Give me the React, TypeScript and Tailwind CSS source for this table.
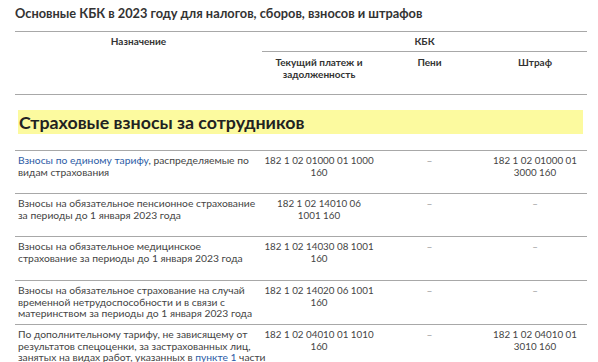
import React from "react";

type Row = {
  h: string;
  name: React.ReactNode;
  cur: React.ReactNode;
  peni: React.ReactNode;
  fine: React.ReactNode;
};

const Dash = () => <span className="text-[#999]">–</span>;

const rows: Row[] = [
  {
    h: "h-[43px]",
    name: (
      <>
        <span className="text-[#2d5ca6]">Взносы по единому тарифу</span>, распределяемые по
        <br />
        видам страхования
      </>
    ),
    cur: (
      <>
        182 1 02 01000 01 1000
        <br />
        160
      </>
    ),
    peni: <Dash />,
    fine: (
      <>
        182 1 02 01000 01
        <br />
        3000 160
      </>
    ),
  },
  {
    h: "h-[43px]",
    name: (
      <>
        Взносы на обязательное пенсионное страхование
        <br />
        за периоды до 1 января 2023 года
      </>
    ),
    cur: (
      <>
        182 1 02 14010 06
        <br />
        1001 160
      </>
    ),
    peni: <Dash />,
    fine: <Dash />,
  },
  {
    h: "h-[44px]",
    name: (
      <>
        Взносы на обязательное медицинское
        <br />
        страхование за периоды до 1 января 2023 года
      </>
    ),
    cur: (
      <>
        182 1 02 14030 08 1001
        <br />
        160
      </>
    ),
    peni: <Dash />,
    fine: <Dash />,
  },
  {
    h: "h-[44px]",
    name: (
      <>
        Взносы на обязательное страхование на случай
        <br />
        временной нетрудоспособности и в связи с
        <br />
        материнством за периоды до 1 января 2023 года
      </>
    ),
    cur: (
      <>
        182 1 02 14020 06 1001
        <br />
        160
      </>
    ),
    peni: <Dash />,
    fine: <Dash />,
  },
  {
    h: "h-[44px]",
    name: (
      <>
        По дополнительному тарифу, не зависящему от
        <br />
        результатов спецоценки, за застрахованных лиц,
        <br />
        занятых на видах работ, указанных в <span className="text-[#2d5ca6]">пункте 1</span> части
      </>
    ),
    cur: (
      <>
        182 1 02 04010 01 1010
        <br />
        160
      </>
    ),
    peni: <Dash />,
    fine: (
      <>
        182 1 02 04010 01
        <br />
        3010 160
      </>
    ),
  },
];

export default function App() {
  return (
    <div className="w-[598px] h-[362px] overflow-hidden bg-white pl-[15px] pr-[11px] font-['Lato',sans-serif] text-[#444]">
      <div className="h-[31px] pt-[4px] text-[12.8px] leading-[18px] font-bold text-[#333] whitespace-nowrap">
        Основные КБК в 2023 году для налогов, сборов, взносов и штрафов
      </div>

      <div className="grid grid-cols-[247px_114px_107px_104px] border-t border-b border-[#a8a8a8] text-[10px] leading-[12px] font-bold text-[#333]">
        <div className="row-span-2 pt-[3px] text-center">Назначение</div>
        <div className="col-span-3 h-[20px] pt-[3px] text-center border-b border-[#a8a8a8]">КБК</div>
        <div className="h-[42px] pt-[4px] text-center">
          Текущий платеж и
          <br />
          задолженность
        </div>
        <div className="h-[42px] pt-[4px] text-center">Пени</div>
        <div className="h-[42px] pt-[4px] text-center">Штраф</div>
      </div>

      <div className="mt-[15px] mb-[16px] ml-[3px] mr-[4px] h-[24px] bg-[#fcfa9f] pl-[1px] text-[17.8px] leading-[24px] font-bold text-[#222] whitespace-nowrap">
        Страховые взносы за сотрудников
      </div>

      <div className="text-[10.3px] leading-[11.5px]">
        {rows.map((r, i) => (
          <div
            key={i}
            className={`grid grid-cols-[247px_114px_107px_104px] border-t border-[#a8a8a8] ${r.h}`}
          >
            <div className="pt-[4px] pl-[3px] whitespace-nowrap">{r.name}</div>
            <div className="pt-[4px] text-center whitespace-nowrap text-[9.8px]">{r.cur}</div>
            <div className="pt-[4px] text-center">{r.peni}</div>
            <div className="pt-[4px] text-center whitespace-nowrap text-[9.8px]">{r.fine}</div>
          </div>
        ))}
      </div>
    </div>
  );
}
